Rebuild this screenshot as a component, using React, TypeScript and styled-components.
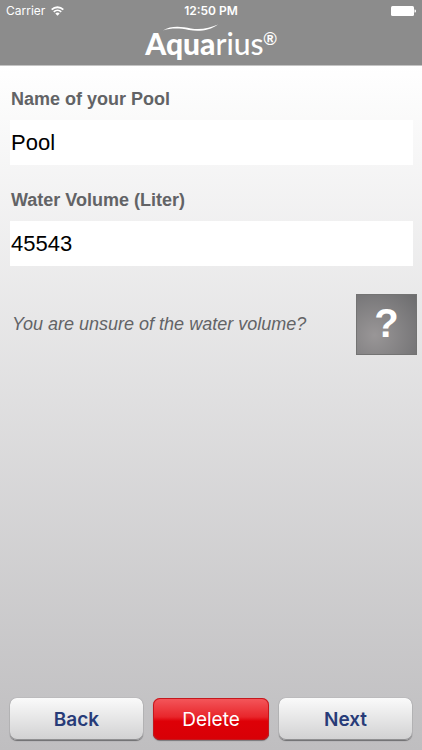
import React, { useState } from "react";
import styled, { createGlobalStyle, css } from "styled-components";

const GlobalStyle = createGlobalStyle`
  *, *::before, *::after { box-sizing: border-box; }
  body { margin: 0; }
  input, button { margin: 0; font: inherit; }
`;

const Page = styled.div`
  display: flex;
  flex-direction: column;
  min-height: 100vh;
  background: linear-gradient(#ffffff 64px, #bfbec0);
  font-family: "Liberation Sans", Arial, sans-serif;
  color: #626366;
`;

const Header = styled.header`
  display: flex;
  flex-direction: column;
  height: 66px;
  background: #8c8c8c;
  border-bottom: 1px solid #c4c4c4;
  color: #ffffff;
`;

const StatusBar = styled.div`
  display: grid;
  grid-template-columns: 1fr auto 1fr;
  align-items: center;
  height: 22px;
  padding: 0 6px;
  font: 400 12px/22px Inter, sans-serif;
`;

const Carrier = styled.span`
  display: flex;
  align-items: center;
  gap: 6px;
`;

const Clock = styled.time`
  font-weight: 600;
`;

const Battery = styled.svg`
  justify-self: end;
`;

const Brand = styled.h1`
  position: relative;
  display: flex;
  align-self: center;
  margin: 0;
  font: 500 30px/42px Lato, sans-serif;
`;

const BrandStrong = styled.strong`
  font-weight: 900;
`;

const Registered = styled.span`
  font: 700 18px/34px "Liberation Sans", Arial, sans-serif;
`;

const Swoosh = styled.svg`
  position: absolute;
  top: 2px;
  left: 18px;
`;

const Form = styled.form`
  display: flex;
  flex: 1;
  flex-direction: column;
`;

const Fields = styled.div`
  display: flex;
  flex-direction: column;
  gap: 24px;
  padding: 22px 9px 0 10px;
`;

const Field = styled.div`
  display: flex;
  flex-direction: column;
  gap: 10px;
`;

const Label = styled.label`
  padding-left: 1px;
  font-size: 18px;
  font-weight: 700;
  line-height: 22px;
`;

const TextInput = styled.input`
  width: 100%;
  height: 45px;
  padding: 0 1px;
  border: 0;
  border-radius: 0;
  background: #ffffff;
  color: #000000;
  font-size: 22px;
`;

const HelpRow = styled.div`
  display: flex;
  align-items: center;
  justify-content: space-between;
  padding: 28px 5px 0 12px;
`;

const HelpText = styled.p`
  margin: 0;
  padding-bottom: 2px;
  font-size: 18px;
  font-style: italic;
  line-height: 22px;
`;

const HelpButton = styled.button`
  width: 61px;
  height: 61px;
  padding: 0 0 4px;
  border: 1px solid #737373;
  background: radial-gradient(circle at 30% 68%, #999697, #6c6c6e);
  color: #ffffff;
  font-size: 40px;
  font-weight: 700;
  line-height: 44px;
`;

const Actions = styled.footer`
  display: grid;
  grid-template-columns: 133fr 116fr 133fr;
  gap: 10px;
  margin-top: auto;
  padding: 0 10px 10px;
`;

const ActionButton = styled.button<{ $danger?: boolean }>`
  height: 42px;
  padding: 2px 0 0;
  border: 0;
  border-radius: 7px;
  font: 600 19px/24px Inter, sans-serif;
  ${({ $danger }) =>
    $danger
      ? css`
          background: linear-gradient(#f4585c, #e8262b 45%, #de0007 55%, #d80006);
          box-shadow: inset 0 0 0 1px #c4181d, inset 0 -1px 0 #8c1d20, 0 1px 1px #77777a;
          color: #ffffff;
          font-weight: 400;
        `
      : css`
          background: linear-gradient(#fafafa, #d1d1d2);
          box-shadow: inset 0 -1px 0 #909092, 0 0 1px #77777a, 0 1px 1px #6c6c6e;
          color: #273b78;
        `}
`;

function WifiIcon() {
  return (
    <svg width="13" height="10" viewBox="0 0 13 10" fill="none" stroke="#fff" strokeWidth="1.8" aria-hidden="true">
      <path d="M.7 3.6a8.3 8.3 0 0 1 11.6 0M2.8 5.9a5.3 5.3 0 0 1 7.4 0" />
      <path d="M6.5 9.7 4.3 7.500a3.1 3.1 0 0 1 4.400 0Z" fill="#fff" stroke="none" />
    </svg>
  );
}

export default function App() {
  const [name, setName] = useState("Pool");
  const [volume, setVolume] = useState("45543");

  return (
    <Page>
      <GlobalStyle />
      <Header>
        <StatusBar>
          <Carrier>
            Carrier
            <WifiIcon />
          </Carrier>
          <Clock>12:50 PM</Clock>
          <Battery width="25" height="10" viewBox="0 0 25 10" fill="#fff" aria-hidden="true">
            <rect width="23" height="10" rx="1.5" />
            <path d="M23.5 3.5h.5q1 0 1 1.5t-1 1.5h-.5z" />
          </Battery>
        </StatusBar>
        <Brand>
          <BrandStrong>Aqua</BrandStrong>
          <span>rius</span>
          <Registered>®</Registered>
          <Swoosh width="56" height="10" viewBox="0 0 56 10" fill="#fff" aria-hidden="true">
            <path d="M0 6.5C8 1.500 18 2.500 28 4.500C38 6 47 4 55 .5C47 6.500 36 8 26 6C16 4 8 4 0 6.500Z" />
          </Swoosh>
        </Brand>
      </Header>
      <Form onSubmit={(event) => event.preventDefault()}>
        <Fields>
          <Field>
            <Label htmlFor="pool-name">Name of your Pool</Label>
            <TextInput id="pool-name" value={name} onChange={(event) => setName(event.target.value)} />
          </Field>
          <Field>
            <Label htmlFor="water-volume">Water Volume (Liter)</Label>
            <TextInput
              id="water-volume"
              inputMode="numeric"
              value={volume}
              onChange={(event) => setVolume(event.target.value)}
            />
          </Field>
        </Fields>
        <HelpRow>
          <HelpText>You are unsure of the water volume?</HelpText>
          <HelpButton type="button" aria-label="Help with the water volume">?</HelpButton>
        </HelpRow>
        <Actions>
          <ActionButton type="button">Back</ActionButton>
          <ActionButton type="button" $danger>Delete</ActionButton>
          <ActionButton type="submit">Next</ActionButton>
        </Actions>
      </Form>
    </Page>
  );
}
